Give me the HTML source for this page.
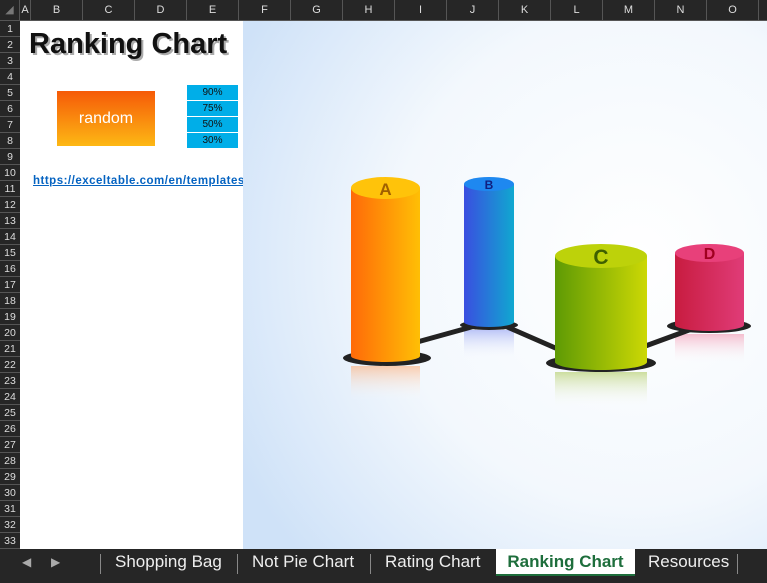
<!DOCTYPE html>
<html><head><style>
*{margin:0;padding:0;box-sizing:border-box}
body{width:767px;height:583px;overflow:hidden;background:#fff;font-family:"Liberation Sans",sans-serif;position:relative}
.hdr{position:absolute;left:0;top:0;width:767px;height:21px;background:#262626;border-bottom:1px solid #555}
.col{position:absolute;top:0;height:20px;line-height:20px;color:#ddd;font-size:11px;text-align:center;border-right:1px solid #555}
.rows{position:absolute;left:0;top:21px;width:20px;height:528px;background:#262626}
.rn{position:absolute;left:0;width:20px;height:16px;line-height:16px;color:#ddd;font-size:10.5px;text-align:center;border-bottom:1px solid #555}
.tabs{position:absolute;left:0;top:549px;width:767px;height:34px;background:#262626}
.tab{position:absolute;top:0;height:27px;line-height:26px;color:#eee;font-size:17px}
.sep{position:absolute;top:5px;width:1px;height:20px;background:#888}
</style></head><body>
<div class="hdr">
<div class="col" style="left:0;width:20px;color:#777">◢</div>
<div class="col" style="left:20px;width:11px">A</div>
<div class="col" style="left:31px;width:52px">B</div>
<div class="col" style="left:83px;width:52px">C</div>
<div class="col" style="left:135px;width:52px">D</div>
<div class="col" style="left:187px;width:52px">E</div>
<div class="col" style="left:239px;width:52px">F</div>
<div class="col" style="left:291px;width:52px">G</div>
<div class="col" style="left:343px;width:52px">H</div>
<div class="col" style="left:395px;width:52px">I</div>
<div class="col" style="left:447px;width:52px">J</div>
<div class="col" style="left:499px;width:52px">K</div>
<div class="col" style="left:551px;width:52px">L</div>
<div class="col" style="left:603px;width:52px">M</div>
<div class="col" style="left:655px;width:52px">N</div>
<div class="col" style="left:707px;width:52px">O</div>
</div>
<div class="rows">
<div class="rn" style="top:0">1</div><div class="rn" style="top:16px">2</div><div class="rn" style="top:32px">3</div><div class="rn" style="top:48px">4</div><div class="rn" style="top:64px">5</div><div class="rn" style="top:80px">6</div><div class="rn" style="top:96px">7</div><div class="rn" style="top:112px">8</div><div class="rn" style="top:128px">9</div><div class="rn" style="top:144px">10</div><div class="rn" style="top:160px">11</div><div class="rn" style="top:176px">12</div><div class="rn" style="top:192px">13</div><div class="rn" style="top:208px">14</div><div class="rn" style="top:224px">15</div><div class="rn" style="top:240px">16</div><div class="rn" style="top:256px">17</div><div class="rn" style="top:272px">18</div><div class="rn" style="top:288px">19</div><div class="rn" style="top:304px">20</div><div class="rn" style="top:320px">21</div><div class="rn" style="top:336px">22</div><div class="rn" style="top:352px">23</div><div class="rn" style="top:368px">24</div><div class="rn" style="top:384px">25</div><div class="rn" style="top:400px">26</div><div class="rn" style="top:416px">27</div><div class="rn" style="top:432px">28</div><div class="rn" style="top:448px">29</div><div class="rn" style="top:464px">30</div><div class="rn" style="top:480px">31</div><div class="rn" style="top:496px">32</div><div class="rn" style="top:512px">33</div>
</div>

<div style="position:absolute;left:29px;top:28px;font-size:29px;font-weight:bold;color:#111;text-shadow:2px 2px 0 #aaa;letter-spacing:0px">Ranking Chart</div>
<div style="position:absolute;left:57px;top:91px;width:98px;height:55px;background:linear-gradient(#f65a08,#fdb814);color:#fff;font-size:16px;text-align:center;line-height:55px">random</div>
<div style="position:absolute;left:187px;top:85px;width:51px;font-size:10px;color:#111;text-align:center">
<div style="height:15px;line-height:15px;background:#00aee8;margin-bottom:1px">90%</div>
<div style="height:15px;line-height:15px;background:#00aee8;margin-bottom:1px">75%</div>
<div style="height:15px;line-height:15px;background:#00aee8;margin-bottom:1px">50%</div>
<div style="height:15px;line-height:15px;background:#00aee8">30%</div>
</div>
<div style="position:absolute;left:33px;top:175px;font-size:11.5px;font-weight:bold;color:#0563c1;text-decoration:underline;white-space:nowrap;width:210px;overflow:hidden;letter-spacing:0.5px">https://exceltable.com/en/templates</div>

<svg style="position:absolute;left:243px;top:21px" width="524" height="528" viewBox="243 21 524 528">
<defs>
<radialGradient id="bg" cx="75%" cy="45%" r="85%"><stop offset="0" stop-color="#fff"/><stop offset="0.55" stop-color="#f3f8fd"/><stop offset="1" stop-color="#cfe2f8"/></radialGradient>
<linearGradient id="ga" x1="0" x2="1"><stop offset="0" stop-color="#ff6a08"/><stop offset="1" stop-color="#ffbf05"/></linearGradient>
<linearGradient id="gb" x1="0" x2="1"><stop offset="0" stop-color="#3a4ee0"/><stop offset="1" stop-color="#10a8d0"/></linearGradient>
<linearGradient id="gc" x1="0" x2="1"><stop offset="0" stop-color="#5e9a05"/><stop offset="1" stop-color="#ccd805"/></linearGradient>
<linearGradient id="gd" x1="0" x2="1"><stop offset="0" stop-color="#c81c40"/><stop offset="1" stop-color="#e03c78"/></linearGradient>
<linearGradient id="fa" x1="0" y1="0" x2="0" y2="1"><stop offset="0" stop-color="#ffa060" stop-opacity=".5"/><stop offset="1" stop-color="#fff" stop-opacity="0"/></linearGradient>
<linearGradient id="fb" x1="0" y1="0" x2="0" y2="1"><stop offset="0" stop-color="#8090f0" stop-opacity=".5"/><stop offset="1" stop-color="#fff" stop-opacity="0"/></linearGradient>
<linearGradient id="fc" x1="0" y1="0" x2="0" y2="1"><stop offset="0" stop-color="#a0c040" stop-opacity=".5"/><stop offset="1" stop-color="#fff" stop-opacity="0"/></linearGradient>
<linearGradient id="fd" x1="0" y1="0" x2="0" y2="1"><stop offset="0" stop-color="#f080a0" stop-opacity=".5"/><stop offset="1" stop-color="#fff" stop-opacity="0"/></linearGradient>
</defs>
<rect x="243" y="21" width="524" height="528" fill="url(#bg)"/>
<rect x="351" y="366" width="69" height="35" fill="url(#fa)"/>
<rect x="464" y="330" width="50" height="30" fill="url(#fb)"/>
<rect x="555" y="372" width="92" height="35" fill="url(#fc)"/>
<rect x="675" y="334" width="69" height="30" fill="url(#fd)"/>
<g stroke="#222" stroke-width="5" fill="none"><path d="M410 344 L475 326"/><path d="M505 326 L560 350"/><path d="M640 348 L700 326"/></g>
<ellipse cx="387" cy="358" rx="44" ry="8" fill="#222"/>
<ellipse cx="489" cy="325" rx="29" ry="5" fill="#222"/>
<ellipse cx="601" cy="363" rx="55" ry="9" fill="#222"/>
<ellipse cx="709" cy="326" rx="42" ry="7" fill="#222"/>
<path d="M351 188 V356 A34.5 6 0 0 0 420 356 V188 Z" fill="url(#ga)"/>
<ellipse cx="385.5" cy="188" rx="34.5" ry="11" fill="#ffc30a"/>
<text x="385.5" y="195" text-anchor="middle" font-size="17" font-weight="bold" fill="#a06000">A</text>
<path d="M464 184 V322 A25 5 0 0 0 514 322 V184 Z" fill="url(#gb)"/>
<ellipse cx="489" cy="184" rx="25" ry="7" fill="#1e88f0"/>
<text x="489" y="189" text-anchor="middle" font-size="12" font-weight="bold" fill="#102080">B</text>
<path d="M555 256 V362 A46 8 0 0 0 647 362 V256 Z" fill="url(#gc)"/>
<ellipse cx="601" cy="256" rx="46" ry="12" fill="#bdd20a"/>
<text x="601" y="264" text-anchor="middle" font-size="21" font-weight="bold" fill="#3e6000">C</text>
<path d="M675 253 V325 A34.5 6 0 0 0 744 325 V253 Z" fill="url(#gd)"/>
<ellipse cx="709.5" cy="253" rx="34.5" ry="9" fill="#e8407a"/>
<text x="709.5" y="259" text-anchor="middle" font-size="16" font-weight="bold" fill="#a00020">D</text>
</svg>

<div class="tabs">
<div class="tab" style="left:22px;font-size:12px;color:#aaa">◀</div>
<div class="tab" style="left:51px;font-size:12px;color:#aaa">▶</div>
<div class="sep" style="left:100px"></div>
<div class="tab" style="left:115px">Shopping Bag</div>
<div class="sep" style="left:237px"></div>
<div class="tab" style="left:252px">Not Pie Chart</div>
<div class="sep" style="left:370px"></div>
<div class="tab" style="left:385px">Rating Chart</div>
<div class="tab" style="left:496px;width:139px;background:#fff;color:#1e6e3c;font-weight:bold;text-align:center;border-bottom:2px solid #1e6e3c">Ranking Chart</div>
<div class="tab" style="left:648px">Resources</div>
<div class="sep" style="left:737px"></div>
</div>
</body></html>
